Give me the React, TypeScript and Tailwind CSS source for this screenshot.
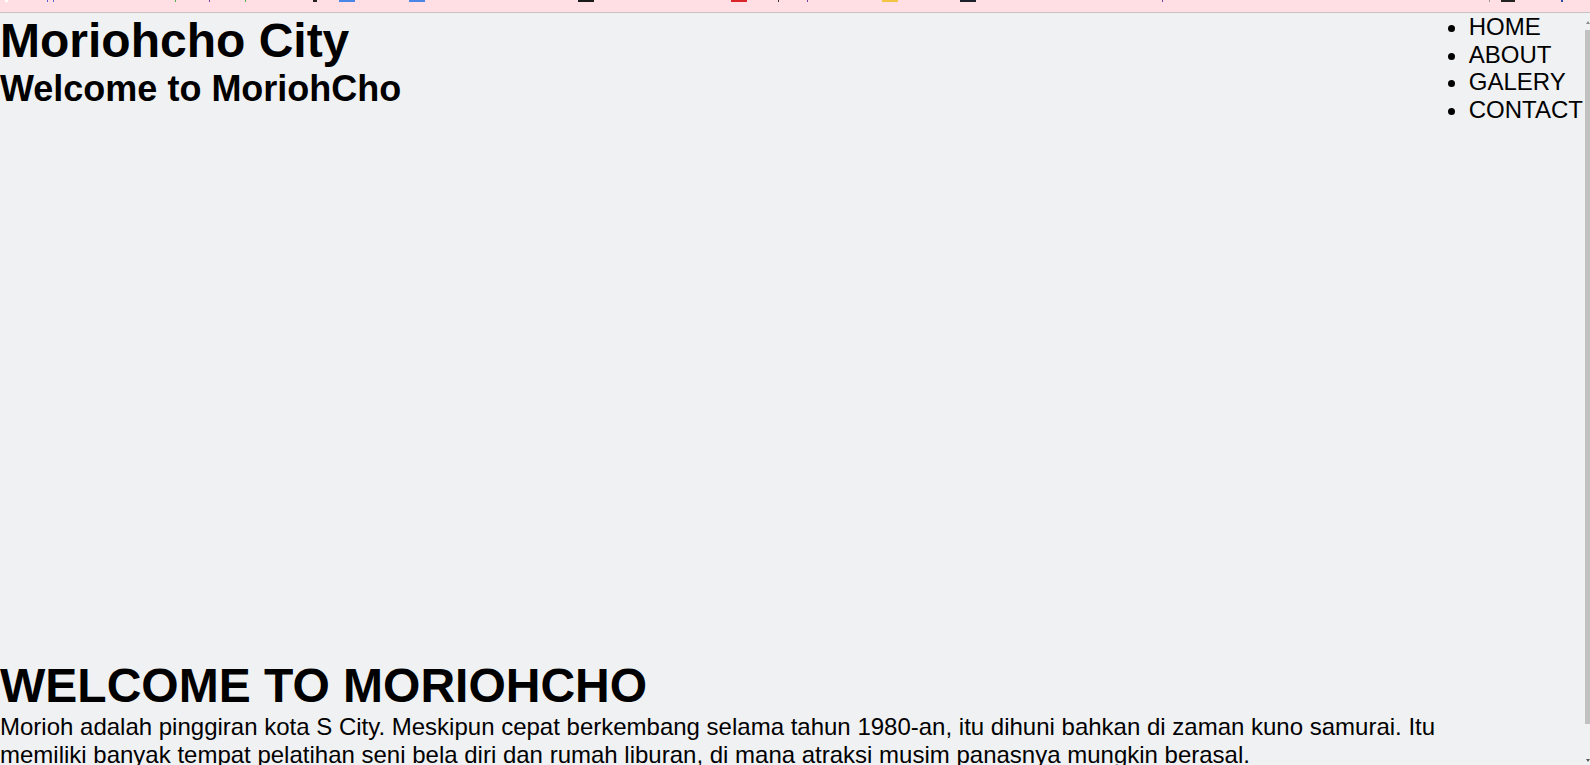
const marks = [
  { left: 5, width: 3, color: "bg-white" },
  { left: 47, width: 1, color: "bg-[#5b5bd6]" },
  { left: 53, width: 1, color: "bg-[#5b5bd6]" },
  { left: 175, width: 1, color: "bg-[#4caf50]" },
  { left: 209, width: 1, color: "bg-[#7b3fa0]" },
  { left: 245, width: 1, color: "bg-[#4caf50]" },
  { left: 313, width: 4, color: "bg-[#222]" },
  { left: 339, width: 16, color: "bg-[#4a86e8]" },
  { left: 409, width: 16, color: "bg-[#4a86e8]" },
  { left: 578, width: 16, color: "bg-[#1a1a1a]" },
  { left: 731, width: 16, color: "bg-[#d9252a]" },
  { left: 778, width: 1, color: "bg-[#333]" },
  { left: 807, width: 1, color: "bg-[#7b3fa0]" },
  { left: 882, width: 16, color: "bg-[#f4c542]" },
  { left: 960, width: 16, color: "bg-[#1b1f2a]" },
  { left: 1162, width: 1, color: "bg-[#7b3fa0]" },
  { left: 1489, width: 1, color: "bg-[#999]" },
  { left: 1501, width: 14, color: "bg-[#222]" },
  { left: 1561, width: 2, color: "bg-[#2b4aa0]" },
];

const navItems = ["HOME", "ABOUT", "GALERY", "CONTACT"];

export default function App() {
  return (
    <div className="min-h-[765px] bg-[#f0f1f3] text-black font-['Liberation_Sans',Arial,sans-serif]">
      {/* cropped bookmark bar */}
      <div className="relative h-[13px] bg-[#ffdfe3] border-b border-[#c9c3c4]">
        {marks.map((m, i) => (
          <span
            key={i}
            className={`absolute top-0 h-[2px] ${m.color}`}
            style={{ left: m.left, width: m.width }}
          />
        ))}
      </div>

      <div className="flex">
        <main className="flex-1 min-w-0">
          <header className="flex items-start justify-between">
            <div>
              <h1 className="text-[48px] font-bold leading-[1.149]">
                Moriohcho City
              </h1>
              <h2 className="text-[36px] font-bold leading-[1.149]">
                Welcome to MoriohCho
              </h2>
            </div>
            <ul className="list-disc pl-10 mr-[2px] text-[24px] leading-[1.149]">
              {navItems.map((item) => (
                <li key={item}>
                  <a href="#">{item}</a>
                </li>
              ))}
            </ul>
          </header>

          <div className="h-[535px]" />

          <section className="max-w-[1460px]">
            <h1 className="text-[48px] font-bold leading-[1.149]">
              WELCOME TO MORIOHCHO
            </h1>
            <p className="text-[24px] leading-[1.149]">
              Morioh adalah pinggiran kota S City. Meskipun cepat berkembang
              selama tahun 1980-an, itu dihuni bahkan di zaman kuno samurai. Itu
              memiliki banyak tempat pelatihan seni bela diri dan rumah liburan,
              di mana atraksi musim panasnya mungkin berasal.
            </p>
          </section>
        </main>

        {/* thin scrollbar */}
        <aside className="w-[5px] flex flex-col items-center h-[752px]">
          <svg width="5" height="17" viewBox="0 0 5 17">
            <path d="M1 11 L3 8 L5 11 Z" fill="#8a8a8a" />
          </svg>
          <div className="w-[5px] h-[694px] bg-[#c1c1c1]" />
          <div className="flex-1" />
          <svg width="5" height="8" viewBox="0 0 5 8">
            <path d="M1 2 L3 5 L5 2 Z" fill="#555" />
          </svg>
        </aside>
      </div>
    </div>
  );
}
